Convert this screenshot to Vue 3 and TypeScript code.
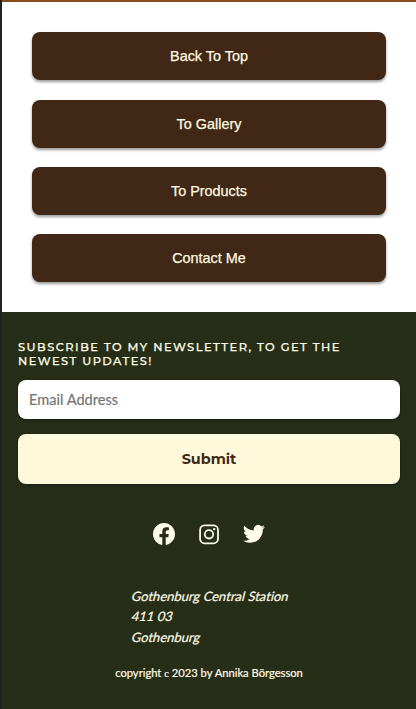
<script setup lang="ts">
const links: string[] = ['Back To Top', 'To Gallery', 'To Products', 'Contact Me']
const addressLines: string[] = ['Gothenburg Central Station', '411 03', 'Gothenburg']
</script>

<template>
  <div class="page">
    <main class="links">
      <button v-for="link in links" :key="link" class="link" type="button">{{ link }}</button>
    </main>
    <footer class="footer">
      <form class="newsletter" @submit.prevent>
        <label class="heading" for="email">Subscribe to my newsletter, to get the<br />newest updates!</label>
        <input id="email" class="email" type="email" placeholder="Email Address" />
        <button class="submit" type="submit">Submit</button>
      </form>
      <div class="social">
        <svg viewBox="0 0 24 24" role="img" aria-label="Facebook">
          <path d="M12 1C5.9 1 1 5.95 1 12.07c0 5.52 4.02 10.1 9.28 10.93v-7.73H7.49v-3.2h2.79V9.63c0-2.78 1.64-4.31 4.16-4.31 1.2 0 2.46.22 2.46.22v2.72h-1.39c-1.36 0-1.79.85-1.79 1.73v2.08h3.05l-.49 3.2h-2.56V23C18.98 22.17 23 17.59 23 12.07 23 5.95 18.08 1 12 1Z" />
        </svg>
        <svg viewBox="0 0 24 24" role="img" aria-label="Instagram">
          <g class="outline">
            <rect x="3.1" y="3.4" width="17.9" height="17.9" rx="4.5" />
            <circle cx="12" cy="12.3" r="4.2" />
          </g>
          <circle cx="17.2" cy="7.1" r="1.2" />
        </svg>
        <svg viewBox="0 0 24 24" role="img" aria-label="Twitter">
          <path d="M23 5.1a9 9 0 0 1-2.6.7 4.5 4.5 0 0 0 2-2.5 9 9 0 0 1-2.9 1.1 4.5 4.5 0 0 0-7.7 4.1A12.8 12.8 0 0 1 2.5 3.8a4.5 4.5 0 0 0 1.4 6 4.5 4.5 0 0 1-2-.6v.1a4.5 4.5 0 0 0 3.6 4.4 4.5 4.5 0 0 1-2 .1 4.5 4.5 0 0 0 4.2 3.1A9 9 0 0 1 1 18.8a12.8 12.8 0 0 0 6.9 2c8.3 0 12.9-6.9 12.9-12.9v-.6A9.2 9.2 0 0 0 23 5.1Z" />
        </svg>
      </div>
      <address class="address">
        <span v-for="line in addressLines" :key="line" class="line">{{ line }}</span>
      </address>
      <p class="copyright">copyright <span class="mark">c</span> 2023 by Annika Börgesson</p>
    </footer>
  </div>
</template>

<style>
body {
  margin: 0;
}
</style>

<style scoped>
.page {
  box-sizing: border-box;
  height: 709px;
  overflow: hidden;
  border-left: 2px solid #222224;
  background: #fff;
  display: flex;
  flex-direction: column;
}
.links {
  box-sizing: border-box;
  height: 312px;
  flex: none;
  border-top: 2px solid #874d22;
  padding: 30.4px 30px 0;
  display: flex;
  flex-direction: column;
  gap: 19.3px;
}
.link {
  flex: none;
  height: 48px;
  border: 0;
  border-radius: 8px;
  background: #402716;
  color: #fff9e0;
  font: 14.4px "Liberation Sans", Arial, sans-serif;
  -webkit-text-stroke: 0.25px #fff9e0;
  box-shadow: 0 2px 3px rgba(0, 0, 0, 0.4);
}
.footer {
  flex: 1;
  background: #262e18;
  color: #fffbe5;
  font-family: Lato, sans-serif;
  display: flex;
  flex-direction: column;
  align-items: center;
}
.newsletter {
  box-sizing: border-box;
  width: 100%;
  padding: 28px 16px 0;
  display: flex;
  flex-direction: column;
}
.heading {
  height: 28px;
  font: 500 11.4px/14px Montserrat, Inter, sans-serif;
  letter-spacing: 1.49px;
  -webkit-text-stroke: 0.25px #fffbe5;
  text-transform: uppercase;
  white-space: nowrap;
}
.email {
  box-sizing: border-box;
  height: 39px;
  margin: 12px 0 15px;
  padding: 0 11px 1px;
  border: 0;
  border-radius: 8px;
  background: #fff;
  font: 14.6px Lato, sans-serif;
  box-shadow: 0 1px 3px rgba(0, 0, 0, 0.4);
}
.email::placeholder {
  color: #757575;
  -webkit-text-stroke: 0.2px #757575;
}
.submit {
  height: 50px;
  padding: 0;
  border: 0;
  border-radius: 8px;
  background: #fff9dc;
  color: #402716;
  font: 700 14.4px Montserrat, "Open Sans", sans-serif;
  box-shadow: 0 1px 3px rgba(0, 0, 0, 0.4);
}
.social {
  margin-top: 38px;
  display: flex;
  gap: 21px;
}
.social svg {
  width: 24px;
  height: 24px;
  fill: #fffbea;
}
.outline {
  fill: none;
  stroke: #fffbea;
  stroke-width: 1.8;
}
.address {
  margin-top: 40px;
  width: 154px;
  font-size: 13px;
  font-style: normal;
  font-variant-ligatures: none;
  line-height: 20.3px;
  white-space: nowrap;
  -webkit-text-stroke: 0.2px #fffbe5;
  display: flex;
  flex-direction: column;
  align-items: flex-start;
}
/* The regular face, slanted: the address has no cursive letterforms. */
.line {
  transform: skewX(-14deg);
}
.copyright {
  margin: 18px 0 0;
  font-size: 11.2px;
  line-height: 16px;
  white-space: nowrap;
  -webkit-text-stroke: 0.2px #fffbe5;
}
.mark {
  font: 10.4px "Liberation Serif", serif;
}
</style>
